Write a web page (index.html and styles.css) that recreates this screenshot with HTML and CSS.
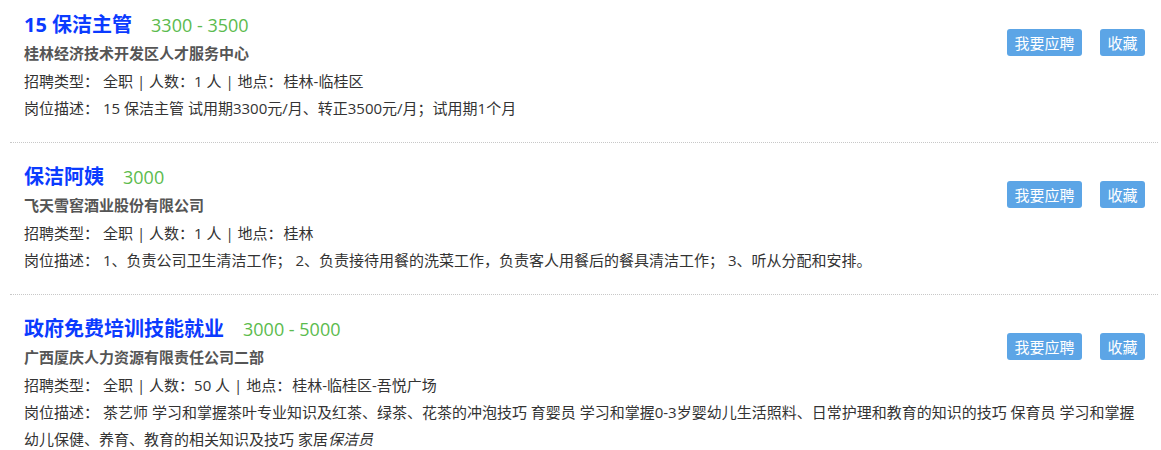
FILE: index.html
```html
<!DOCTYPE html>
<html lang="zh-CN">
<head>
  <meta charset="UTF-8">
  <title>招聘信息</title>
  <link rel="stylesheet" href="styles.css">
</head>
<body>
  <div class="job-list">
    <div class="job-item">
      <div class="job-actions">
        <button class="btn">我要应聘</button>
        <button class="btn">收藏</button>
      </div>
      <div class="job-title">
        <a href="#">15 保洁主管</a>
        <span class="salary">3300 - 3500</span>
      </div>
      <div class="company">桂林经济技术开发区人才服务中心</div>
      <div class="info"><span class="label">招聘类型：</span>全职 | 人数：1 人 | 地点：<span class="place">桂林-临桂区</span></div>
      <div class="info"><span class="label">岗位描述：</span>15 保洁主管 试用期3300元/月、转正3500元/月；试用期1个月</div>
    </div>

    <div class="job-item">
      <div class="job-actions">
        <button class="btn">我要应聘</button>
        <button class="btn">收藏</button>
      </div>
      <div class="job-title">
        <a href="#">保洁阿姨</a>
        <span class="salary">3000</span>
      </div>
      <div class="company">飞天雪窖酒业股份有限公司</div>
      <div class="info"><span class="label">招聘类型：</span>全职 | 人数：1 人 | 地点：<span class="place">桂林</span></div>
      <div class="info"><span class="label">岗位描述：</span>1、负责公司卫生清洁工作； 2、负责接待用餐的洗菜工作，负责客人用餐后的餐具清洁工作； 3、听从分配和安排。</div>
    </div>

    <div class="job-item">
      <div class="job-actions">
        <button class="btn">我要应聘</button>
        <button class="btn">收藏</button>
      </div>
      <div class="job-title">
        <a href="#">政府免费培训技能就业</a>
        <span class="salary">3000 - 5000</span>
      </div>
      <div class="company">广西厦庆人力资源有限责任公司二部</div>
      <div class="info"><span class="label">招聘类型：</span>全职 | 人数：50 人 | 地点：<span class="place">桂林-临桂区-吾悦广场</span></div>
      <div class="info"><span class="label">岗位描述：</span>茶艺师 学习和掌握茶叶专业知识及红茶、绿茶、花茶的冲泡技巧 育婴员 学习和掌握0-3岁婴幼儿生活照料、日常护理和教育的知识的技巧 保育员 学习和掌握幼儿保健、养育、教育的相关知识及技巧 家居<i>保洁员</i></div>
    </div>
  </div>
</body>
</html>
```

FILE: styles.css
```css
body {
  margin: 0;
  background: #fff;
  font-family: "Open Sans", "Noto Sans CJK SC", sans-serif;
  color: #333;
}
.job-list {
  margin: 0 3px 0 10px;
}
.job-item {
  padding: 10px 13px 20px 14px;
  border-bottom: 1px dotted #c8c8c8;
}
.job-item + .job-item {
  padding-top: 19px;
}
.job-actions {
  float: right;
  margin-top: 19px;
  display: flex;
  gap: 18px;
}
.btn {
  height: 27px;
  padding: 0 7.5px;
  border: none;
  border-radius: 3px;
  background: #5ca5e6;
  color: #fff;
  font-family: "Noto Sans CJK SC", sans-serif;
  font-size: 15px;
  cursor: pointer;
}
.job-title {
  display: flex;
  align-items: baseline;
  gap: 19px;
  height: 30px;
  line-height: 30px;
}
.job-title a {
  color: #0b3bff;
  font-size: 20px;
  font-weight: bold;
  text-decoration: none;
}
.salary {
  color: #5bbb4e;
  font-size: 18px;
}
.company {
  height: 26px;
  line-height: 26px;
  margin-bottom: 2px;
  font-size: 15px;
  font-weight: bold;
  color: #555;
}
.info {
  font-size: 15px;
  line-height: 27px;
  color: #333;
}
.label {
  margin-right: 4px;
}
.place {
  margin-left: 1px;
}
```
